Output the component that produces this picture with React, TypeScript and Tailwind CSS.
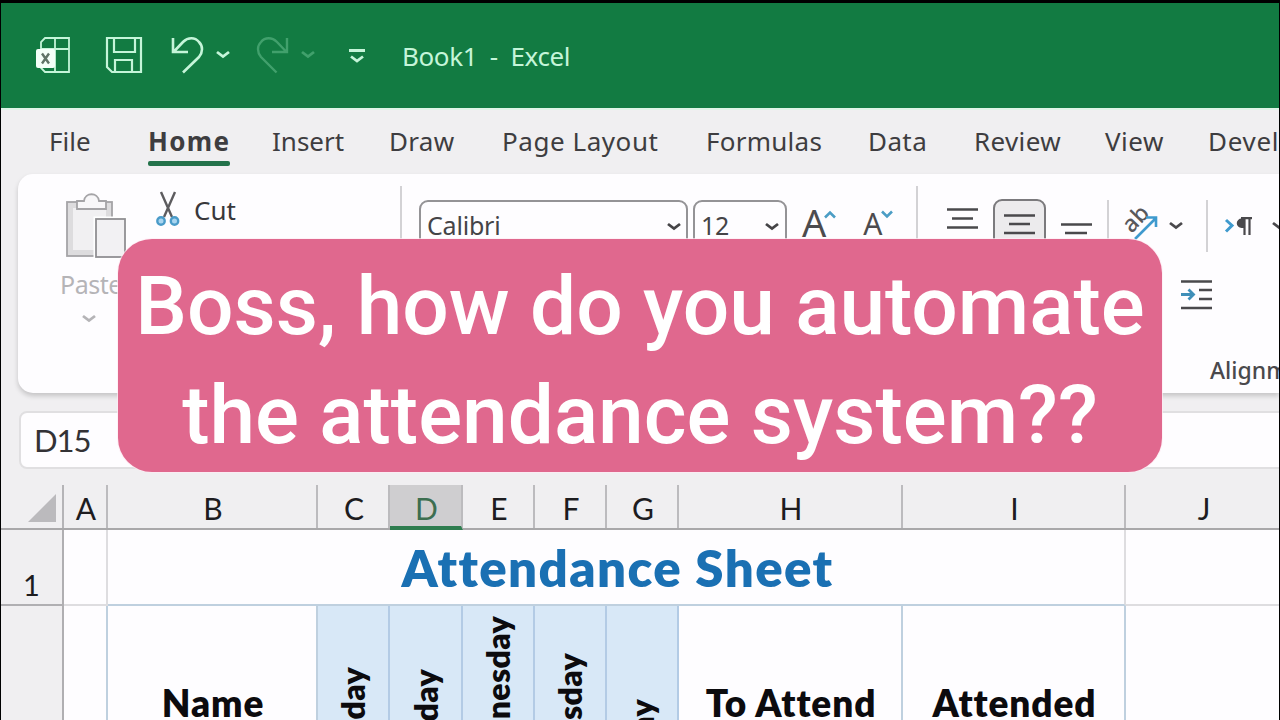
import type { ReactNode } from 'react'
import clsx from 'clsx'

const tabs = [
  { name: 'File', className: 'w-[99px]' },
  { name: 'Home', className: 'w-[124px] tracking-[1.3px]' },
  { name: 'Insert', className: 'w-[117px]' },
  { name: 'Draw', className: 'w-[113px] tracking-[0.3px]' },
  { name: 'Page Layout', className: 'w-[204px] tracking-[0.55px]' },
  { name: 'Formulas', className: 'w-[162px] tracking-[0.25px]' },
  { name: 'Data', className: 'w-[106px] tracking-[0.4px]' },
  { name: 'Review', className: 'w-[131px] tracking-[0.35px]' },
  { name: 'View', className: 'w-[103px] tracking-[0.5px]' },
  { name: 'Developer', className: 'w-[140px] tracking-[0.7px]' },
]

const columns = [
  { letter: 'A', className: 'w-[44px]' },
  { letter: 'B', className: 'w-[210px]' },
  { letter: 'C', className: 'w-[72px]' },
  { letter: 'D', className: 'w-[73px]' },
  { letter: 'E', className: 'w-[72px]' },
  { letter: 'F', className: 'w-[72px]' },
  { letter: 'G', className: 'w-[72px]' },
  { letter: 'H', className: 'w-[224px]' },
  { letter: 'I', className: 'w-[223px]' },
  { letter: 'J', className: 'w-[156px]' },
]

const days = [
  { name: 'Monday', className: 'w-[72px] pt-[61px]' },
  { name: 'Tuesday', className: 'w-[73px] pt-[63px]' },
  { name: 'Wednesday', className: 'w-[72px] pt-[10px]' },
  { name: 'Thursday', className: 'w-[72px] pt-[47px]' },
  { name: 'Friday', className: 'w-[72px] pt-[93px]' },
]

function Chevron({ className }: { className?: string }) {
  return (
    <svg viewBox="0 0 14 9" fill="none" stroke="currentColor" strokeWidth="2.8" className={clsx('h-[9px] w-[14px] shrink-0', className)}>
      <path d="M1 2l6 4.6L13 2" />
    </svg>
  )
}

function Divider({ className }: { className?: string }) {
  return <div className={clsx('w-[2px] shrink-0 bg-[#d3d2d5]', className)} />
}

function TitleBar() {
  return (
    <header className="flex h-[105px] shrink-0 items-start bg-[#127b42] pt-[33px] text-[#c5f5d9]">
      <svg viewBox="0 0 36 38" fill="none" stroke="currentColor" strokeWidth="1.8" className="ml-[34px] h-[38px] w-[36px]">
        <path d="M6 14V6l4-4h24v34H10l-4-4v-2M20 2v34M6 13h28" />
        <rect x="1" y="13" width="19" height="19" rx="2" fill="#f3fff8" stroke="none" />
        <path d="M7 17.500l7 10M14 17.500l-7 10" stroke="#5f7467" strokeWidth="2.400" />
      </svg>
      <svg viewBox="0 0 38 38" fill="none" stroke="currentColor" strokeWidth="2.200" className="ml-[34px] h-[38px] w-[38px]">
        <path d="M2 2h34v34H7l-5-5zM9 2v14h21V2M10 36V24h17v12" />
      </svg>
      <svg viewBox="0 0 34 40" fill="none" stroke="currentColor" strokeWidth="2.600" className="ml-[28px] h-[40px] w-[34px]">
        <path d="M2 2v14h15M2.500 16L12 6c5-5 12-5 16 0 4 4 4 10 0 15L12 36.500" />
      </svg>
      <Chevron className="mt-[14px] ml-[11px]" />
      <svg viewBox="0 0 34 40" fill="none" stroke="currentColor" strokeWidth="2.400" className="ml-[26px] h-[40px] w-[34px] text-[#41a06c]">
        <path d="M31 2v14H16M30.500 16L21 6C16 1 9 1 5 6c-4 4-4 10 0 15l15.500 15.500" />
      </svg>
      <Chevron className="mt-[14px] ml-[11px] text-[#41a06c]" />
      <svg viewBox="0 0 18 16" fill="none" stroke="currentColor" strokeWidth="2.800" className="mt-[12px] ml-[33px] h-[16px] w-[18px]">
        <path d="M1 2.500h16M3 8.500l6 4.600 6-4.600" />
      </svg>
      <h1 className="mt-[1px] ml-[36px] font-['Noto_Sans'] text-[26px] leading-[38px] tracking-[-0.4px] whitespace-pre">Book1  -  Excel</h1>
    </header>
  )
}

function Tabs() {
  return (
    <nav className="flex h-[66px] shrink-0 border-t-2 border-[#dff5e8] pt-[12px] pl-[48px]">
      {tabs.map((tab) => (
        <div key={tab.name} className={clsx('shrink-0 whitespace-nowrap', tab.className)}>
          <span
            className={clsx(
              "relative inline-block font-['Noto_Sans'] text-[26px] leading-[38px] text-[#3e3d40]",
              tab.name === 'Home' && 'font-bold'
            )}
          >
            {tab.name}
            {tab.name === 'Home' && <i className="absolute top-[39px] left-0 h-[5px] w-full rounded-[2px] bg-[#23724a]" />}
          </span>
        </div>
      ))}
    </nav>
  )
}

function PasteIcon() {
  return (
    <svg viewBox="0 0 62 68" fill="none" stroke="#a5a4a7" strokeWidth="1.800" className="h-[68px] w-[62px]">
      <rect x="2" y="10" width="45" height="54" fill="#dddcde" />
      <path d="M8 16h33v42H8z" fill="#f1f0f2" stroke="none" />
      <path d="M12 17V9h7c1-9 14-9 15 0h7v8z" fill="#f8f7f9" />
      <rect x="31" y="27" width="29" height="38" fill="#f2f1f3" stroke="#fff" strokeWidth="5" />
      <rect x="31" y="27" width="29" height="38" fill="#f2f1f3" stroke="#919093" />
    </svg>
  )
}

function ClipboardGroup() {
  return (
    <div className="flex w-[382px] shrink-0">
      <div className="flex w-[142px] shrink-0 flex-col items-center pt-[18px] text-[#b5b4b7]">
        <div className="pl-[14px]">
          <PasteIcon />
        </div>
        <span className="mt-[6px] ml-[4px] font-['Noto_Sans'] text-[25px] leading-[36px] tracking-[-0.5px]">Paste</span>
        <Chevron className="mt-[12px]" />
      </div>
      <div className="flex items-start pt-[17px]">
        <svg viewBox="0 0 26 36" fill="none" strokeWidth="2.400" className="mr-[13px] -ml-[5px] h-[36px] w-[26px]">
          <path d="M6 1l11 25M20 1L9 26" stroke="#5d5c5f" />
          <circle cx="6" cy="30" r="3.700" fill="#a9d5f0" stroke="#4a9bc9" />
          <circle cx="19.500" cy="30" r="3.700" fill="#a9d5f0" stroke="#4a9bc9" />
        </svg>
        <span className="font-['Noto_Sans'] text-[26px] leading-[38px] text-[#39383b]">Cut</span>
      </div>
    </div>
  )
}

function Combo({ value, className }: { value: string; className?: string }) {
  return (
    <div className={clsx('flex h-[52px] shrink-0 items-start justify-between rounded-[9px] border-2 border-[#949396] pt-[4px] pl-[6px] text-[#454447]', className)}>
      <span className="font-['Noto_Sans'] text-[25px] leading-[38px] tracking-[-0.2px]">{value}</span>
      <Chevron className="mt-[16px]" />
    </div>
  )
}

function FontGroup() {
  return (
    <div className="flex w-[514px] shrink-0 items-start pt-[26px] pl-[17px] text-[#4c4b4e]">
      <Combo value="Calibri" className="w-[269px] pr-[5px]" />
      <Combo value="12" className="ml-[5px] w-[94px] pr-[6px]" />
      <span className="ml-[15px] font-['Noto_Sans'] text-[38px] leading-[44px]">A</span>
      <svg viewBox="0 0 12 9" fill="none" stroke="#4b9dc5" strokeWidth="2.600" className="mt-[10px] -ml-[2px] h-[9px] w-[12px]">
        <path d="M1 7.500l5-5 5 5" />
      </svg>
      <span className="mt-[4px] ml-[27px] font-['Noto_Sans'] text-[30px] leading-[40px]">A</span>
      <svg viewBox="0 0 12 9" fill="none" stroke="#4b9dc5" strokeWidth="2.600" className="mt-[10px] -ml-px h-[9px] w-[12px]">
        <path d="M1 1.500l5 5 5-5" />
      </svg>
    </div>
  )
}

function AlignLines({ className, d }: { className?: string; d: string }) {
  return (
    <svg viewBox="0 0 32 32" fill="none" stroke="#4a494c" strokeWidth="2.400" className={clsx('h-[32px] w-[32px] shrink-0', className)}>
      <path d={d} />
    </svg>
  )
}

function AlignmentGroup() {
  return (
    <div className="flex w-[400px] shrink-0 flex-col pl-[28px] text-[#4a494c]">
      <div className="flex h-[78px] items-start pt-[25px]">
        <AlignLines className="mt-[9px] ml-px" d="M0 1.500h31M5 10.500h21M0 19.500h31" />
        <div className="ml-[14px] h-[54px] w-[53px] rounded-[9px] border-2 border-[#7b7a7d] bg-[#ecebed] pt-[12px] pl-[8px]">
          <AlignLines d="M1 2.500h31M6 11h21M1 20h31" />
        </div>
        <AlignLines className="mt-[23px] ml-[15px]" d="M0 2.500h31M4 11h22M0 20h31" />
        <Divider className="mt-px ml-[14px] h-[52px]" />
        <svg viewBox="0 0 40 36" fill="none" stroke="#3f9ace" strokeWidth="2.600" className="mt-[5px] ml-[10px] h-[36px] w-[40px]">
          <text x="0" y="0" transform="translate(12.500 30) rotate(-46)" fontSize="23" fill="#59585b" stroke="none" className="font-['Noto_Sans'] font-medium">
            ab
          </text>
          <path d="M16 35L37 14M27 13.500h10V23" />
        </svg>
        <Chevron className="mt-[22px] ml-[10px]" />
        <Divider className="mt-px ml-[23px] h-[52px]" />
        <svg viewBox="0 0 30 22" fill="none" className="mt-[17px] ml-[16px] h-[22px] w-[30px]">
          <path d="M2 4l6 5.500-6 6" stroke="#3f9ace" strokeWidth="3" />
          <path d="M20 2.500h-2.500a4.700 4.700 0 000 9.500H20z" fill="#4a494c" />
          <path d="M28 2.200H17M20.500 2v17M25.500 2v17" stroke="#4a494c" strokeWidth="2.200" />
        </svg>
        <Chevron className="mt-[22px] ml-[18px]" />
      </div>
      <svg viewBox="0 0 32 32" fill="none" stroke="#4a494c" strokeWidth="2.400" className="mt-[27px] ml-[235px] h-[32px] w-[32px]">
        <path d="M0 2.500h31M18 11h13M18 20h13M0 29h31" />
        <path d="M0 15.500h12M7.500 10.500l5 5-5 5" stroke="#3f8fb8" strokeWidth="2.800" />
      </svg>
      <span className="mt-[41px] ml-[264px] font-['Noto_Sans'] text-[23px] leading-[36px] font-medium whitespace-nowrap">Alignment</span>
    </div>
  )
}

function Ribbon() {
  return (
    <div className="ml-[17px] flex h-[219px] shrink-0 overflow-visible rounded-l-[15px] bg-[#fefdff] shadow-[0_3px_5px_rgba(0,0,0,0.18)]">
      <ClipboardGroup />
      <Divider className="mt-[12px] h-[180px]" />
      <FontGroup />
      <Divider className="mt-[12px] h-[180px]" />
      <AlignmentGroup />
    </div>
  )
}

function FormulaBar() {
  return (
    <div className="mt-[18px] ml-[18px] flex h-[58px] shrink-0 gap-[12px]">
      <div className="w-[300px] rounded-[8px] border-2 border-[#e0dfe1] bg-[#fefdff] pl-[13px] font-['Lato'] text-[31px] leading-[54px] tracking-[-1px] text-[#333235]">
        D15
      </div>
      <div className="grow border-y-2 border-[#e0dfe1] bg-[#fefdff]" />
    </div>
  )
}

function ColumnHeaders() {
  return (
    <div className="mt-[16px] flex h-[45px] shrink-0 border-b-2 border-[#a9a8aa]">
      <div className="flex w-[63px] shrink-0 justify-end border-r-2 border-[#b5b4b7] pt-[9px] pr-[6px]">
        <svg viewBox="0 0 28 28" className="h-[28px] w-[28px]">
          <path d="M28 0v28H0z" fill="#bbbabd" />
        </svg>
      </div>
      {columns.map(({ letter, className }) => (
        <div
          key={letter}
          className={clsx(
            "shrink-0 border-r-2 border-[#bcbbbe] pl-[2px] text-center font-['Lato'] text-[30px] leading-[46px]",
            letter === 'D' ? '-mb-[2px] border-b-4 border-b-[#2f7d4f] bg-[#cfced0] text-[#3c6e50]' : 'text-[#1d1c1f]',
            className
          )}
        >
          {letter}
        </div>
      ))}
    </div>
  )
}

function HeadCell({ children, className }: { children?: ReactNode; className?: string }) {
  return (
    <div className={clsx("shrink-0 border-r-2 border-[#bfd0df] pt-[75px] pl-[2px] text-center font-['Lato'] text-[37px] leading-[44px] font-extrabold tracking-[0.9px] whitespace-nowrap text-[#0c0b0e]", className)}>
      {children}
    </div>
  )
}

function Sheet() {
  return (
    <div className="flex grow flex-col overflow-hidden bg-[#fefdff] [font-variant-ligatures:none]">
      <div className="flex h-[76px] shrink-0">
        <div className="w-[63px] shrink-0 border-r-2 border-b-2 border-[#b0afb2] bg-[#f0eff1] pt-[35px] text-center font-['Lato'] text-[29px] leading-[40px] text-[#1d1c1f]">
          1
        </div>
        <div className="w-[44px] shrink-0 border-r-2 border-b-2 border-[#dedde0]" />
        <div className="w-[1018px] shrink-0 border-r-2 border-b-2 border-r-[#dedde0] border-b-[#bfd0df] pl-[3px] text-center font-['Lato'] text-[51px] leading-[76px] font-extrabold tracking-[1.4px] text-[#1a70b3]">
          Attendance Sheet
        </div>
        <div className="grow border-b-2 border-[#dedde0]" />
      </div>
      <div className="flex h-[115px] shrink-0">
        <div className="w-[63px] shrink-0 border-r-2 border-[#b0afb2] bg-[#f0eff1]" />
        <HeadCell className="w-[44px]" />
        <HeadCell className="w-[210px]">Name</HeadCell>
        {days.map((day) => (
          <div key={day.name} className={clsx('flex shrink-0 items-start justify-center border-r-2 border-[#b3cbe5] bg-[#d8e8f7]', day.className)}>
            <span className="rotate-180 font-['Lato'] text-[32px] leading-[40px] font-extrabold tracking-[0.3px] whitespace-nowrap text-[#0c0b0e] [writing-mode:vertical-rl]">
              {day.name}
            </span>
          </div>
        ))}
        <HeadCell className="w-[224px]">To Attend</HeadCell>
        <HeadCell className="w-[223px]">Attended</HeadCell>
      </div>
    </div>
  )
}

export default function App() {
  return (
    <div className="relative flex h-[720px] w-[1280px] flex-col overflow-hidden border-x border-t-[3px] border-black bg-[#f0eff1] font-['Noto_Sans',sans-serif]">
      <TitleBar />
      <Tabs />
      <Ribbon />
      <FormulaBar />
      <ColumnHeaders />
      <Sheet />
      {/* caption over the window */}
      <div className="absolute top-[236px] left-[117px] h-[233px] w-[1044px] rounded-[34px] bg-[#e0688e] pt-[13px] text-center font-['Roboto'] text-[82px] leading-[109px] font-medium whitespace-nowrap text-white shadow-[0_0_0_1px_rgba(255,235,243,0.7)]">
        <p>Boss, how do you automate</p>
        <p>the attendance system??</p>
      </div>
    </div>
  )
}
